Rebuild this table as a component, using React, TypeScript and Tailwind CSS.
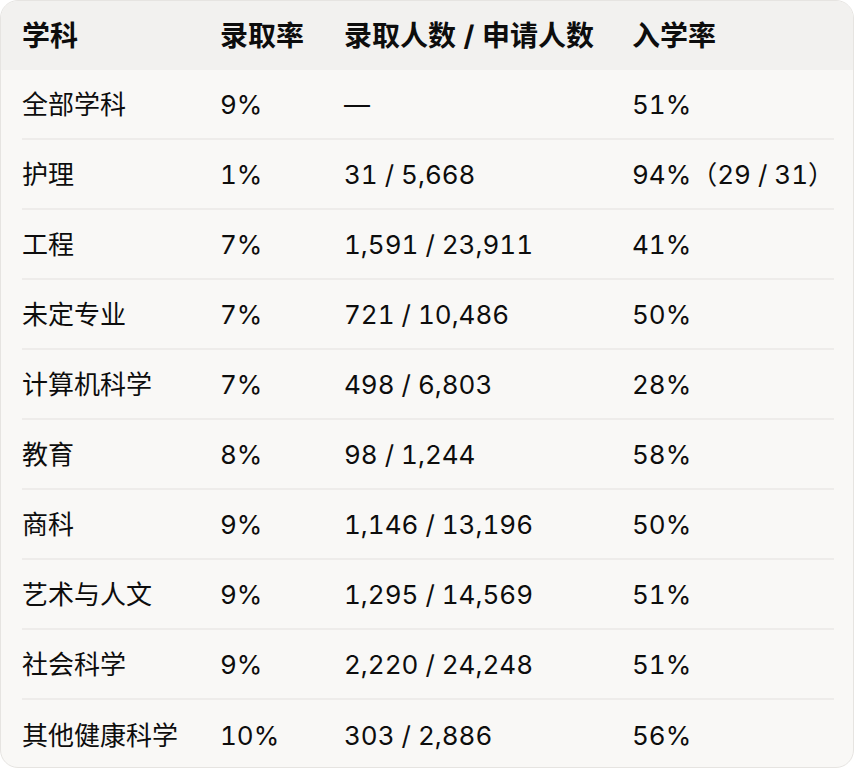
import React from 'react';

const rows: [string, string, string, string][] = [
  ['全部学科', '9%', '—', '51%'],
  ['护理', '1%', '31 / 5,668', '94%（29 / 31）'],
  ['工程', '7%', '1,591 / 23,911', '41%'],
  ['未定专业', '7%', '721 / 10,486', '50%'],
  ['计算机科学', '7%', '498 / 6,803', '28%'],
  ['教育', '8%', '98 / 1,244', '58%'],
  ['商科', '9%', '1,146 / 13,196', '50%'],
  ['艺术与人文', '9%', '1,295 / 14,569', '51%'],
  ['社会科学', '9%', '2,220 / 24,248', '51%'],
  ['其他健康科学', '10%', '303 / 2,886', '56%'],
];

const cols = 'grid grid-cols-[198px_124px_288px_1fr] items-center';

export default function App() {
  return (
    <div className="w-[854px] h-[768px] bg-white font-['Inter','Noto_Sans_CJK_SC',sans-serif] text-[#0d0d0d] text-[26px] tabular-nums">
      <div className="h-full rounded-[18px] border border-[#e6e4e1] bg-[#f9f8f6] overflow-hidden">
        {/* header */}
        <div className={`${cols} h-[69px] bg-[#f2f1ef] pl-[21px] pr-[19px] font-bold text-[28px]`}>
          <div>学科</div>
          <div>录取率</div>
          <div>录取人数 / 申请人数</div>
          <div>入学率</div>
        </div>

        {rows.map((r, i) => (
          <div key={i} className="pl-[21px] pr-[19px]">
            <div className={`${cols} h-[70px] ${i < rows.length - 1 ? 'border-b-2 border-[#eeecea]' : ''}`}>
              {r.map((c, j) => (
                <div key={j} className="whitespace-nowrap">{c}</div>
              ))}
            </div>
          </div>
        ))}
      </div>
    </div>
  );
}
